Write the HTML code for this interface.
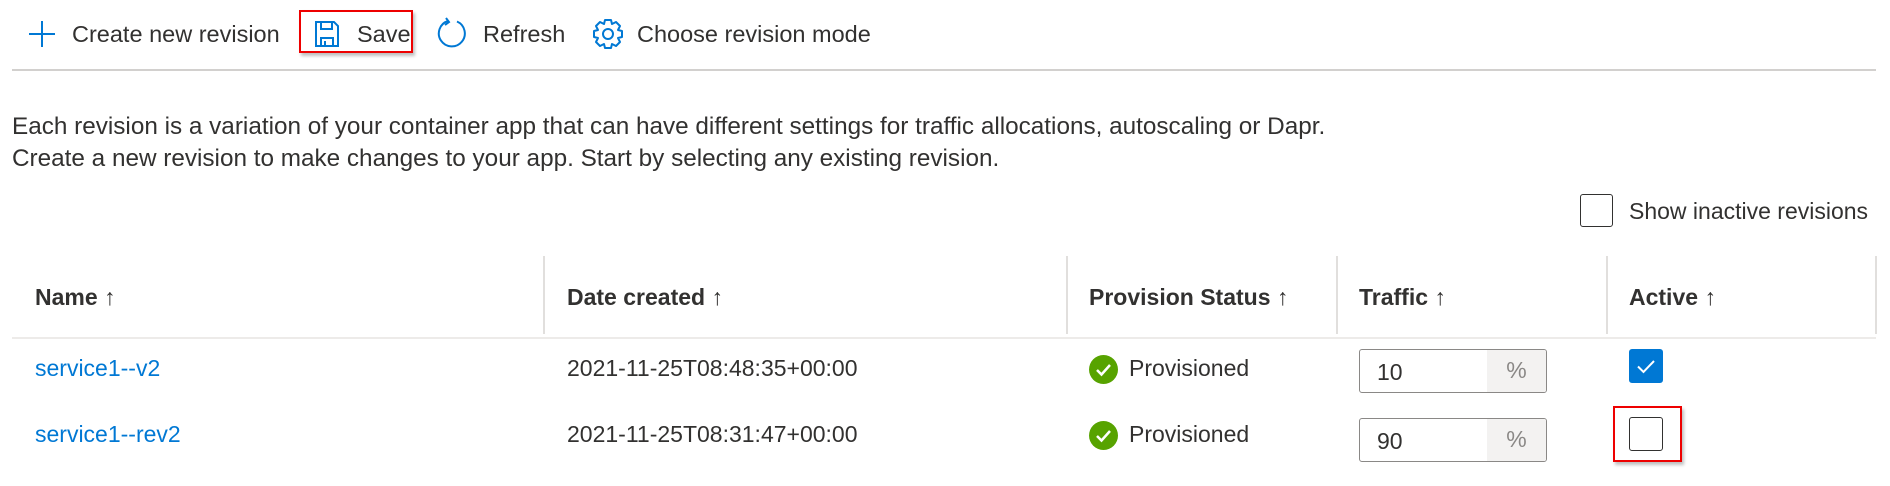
<!DOCTYPE html>
<html><head><meta charset="utf-8"><style>
*{margin:0;padding:0;box-sizing:border-box}
body{width:1890px;height:486px;background:#fff;font-family:"Liberation Sans",Arial,sans-serif;color:#323130;position:relative;overflow:hidden;font-size:23px}
.a{position:absolute;white-space:nowrap;line-height:1}
.hd{font-weight:bold;color:#323130}
.vd{position:absolute;top:256px;height:78px;width:2px;background:#e1dfdd}
.blue{color:#0078d4}
.inp{position:absolute;left:1359px;width:188px;height:44px;border:1.5px solid #8a8886;border-radius:3px;overflow:hidden}
.inp .pc{position:absolute;right:0;top:0;bottom:0;width:59px;background:#f3f2f1;color:#8a8886;text-align:center;line-height:41px}
.inp .v{position:absolute;left:17px;top:0;line-height:44px;font-size:23px}
.ok{position:absolute;left:1089px;width:29px;height:29px;border-radius:50%;background:#57a300}
</style></head><body>
<svg class="a" style="left:28px;top:20px" width="28" height="28" viewBox="0 0 28 28"><path d="M14 1V27M1 14H27" stroke="#0078d4" stroke-width="2"/></svg>
<div class="a" style="left:72px;top:23px;font-size:23.5px">Create new revision</div>
<div class="a" style="left:299px;top:10px;width:114px;height:43px;border:2px solid #e00;box-shadow:2px 3px 3px rgba(0,0,0,.25)"></div>
<svg class="a" style="left:314px;top:20px" width="26" height="28" viewBox="0 0 26 28"><path d="M2 2H20L24 6V26H2Z M7 2V9H18V2 M7 26V18H19V26 M11 21V26" fill="none" stroke="#0078d4" stroke-width="2"/></svg>
<div class="a" style="left:357px;top:23px;font-size:23.5px">Save</div>
<svg class="a" style="left:437px;top:17px" width="32" height="34" viewBox="0 0 32 34"><path d="M11 4A13 13 0 1 0 20 4.5" fill="none" stroke="#0078d4" stroke-width="2"/><path d="M9 1L12 5L8 8" fill="none" stroke="#0078d4" stroke-width="2"/></svg>
<div class="a" style="left:483px;top:23px;font-size:23.5px">Refresh</div>
<svg class="a" style="left:592px;top:18px" width="32" height="32" viewBox="0 0 32 32"><circle cx="16" cy="16" r="5" fill="none" stroke="#0078d4" stroke-width="2"/><path d="M13 2H19L20 6L24 4L28 8L26 12L30 13V19L26 20L28 24L24 28L20 26L19 30H13L12 26L8 28L4 24L6 20L2 19V13L6 12L4 8L8 4L12 6Z" fill="none" stroke="#0078d4" stroke-width="2" stroke-linejoin="round"/></svg>
<div class="a" style="left:637px;top:23px;font-size:23.5px">Choose revision mode</div>
<div class="a" style="left:12px;top:69px;width:1864px;height:2px;background:#d2d0ce"></div>
<div class="a" style="left:12px;top:115px;font-size:24.3px">Each revision is a variation of your container app that can have different settings for traffic allocations, autoscaling or Dapr.</div>
<div class="a" style="left:12px;top:147px;font-size:24.3px">Create a new revision to make changes to your app. Start by selecting any existing revision.</div>
<div class="a" style="left:1580px;top:194px;width:33px;height:33px;border:1.5px solid #323130;border-radius:3px"></div>
<div class="a" style="left:1629px;top:200px">Show inactive revisions</div>
<div class="vd" style="left:543px"></div><div class="vd" style="left:1066px"></div><div class="vd" style="left:1336px"></div><div class="vd" style="left:1606px"></div><div class="vd" style="left:1875px"></div>
<div class="a hd" style="left:35px;top:286px">Name <span style="font-weight:normal">↑</span></div>
<div class="a hd" style="left:567px;top:286px">Date created <span style="font-weight:normal">↑</span></div>
<div class="a hd" style="left:1089px;top:286px">Provision Status <span style="font-weight:normal">↑</span></div>
<div class="a hd" style="left:1359px;top:286px">Traffic <span style="font-weight:normal">↑</span></div>
<div class="a hd" style="left:1629px;top:286px">Active <span style="font-weight:normal">↑</span></div>
<div class="a" style="left:12px;top:337px;width:1864px;height:2px;background:#edebe9"></div>
<div class="a blue" style="left:35px;top:357px">service1--v2</div>
<div class="a" style="left:567px;top:357px">2021-11-25T08:48:35+00:00</div>
<div class="ok" style="top:355px"><svg width="29" height="29"><path d="M8 15L12.5 19.5L21 10" fill="none" stroke="#fff" stroke-width="2.5"/></svg></div>
<div class="a" style="left:1129px;top:357px">Provisioned</div>
<div class="inp" style="top:349px"><span class="v">10</span><span class="pc">%</span></div>
<div class="a" style="left:1629px;top:349px;width:34px;height:34px;border-radius:3px;background:#0078d4"><svg width="34" height="34"><path d="M9 17.5L14.5 23L25 12" fill="none" stroke="#fff" stroke-width="2"/></svg></div>
<div class="a blue" style="left:35px;top:423px">service1--rev2</div>
<div class="a" style="left:567px;top:423px">2021-11-25T08:31:47+00:00</div>
<div class="ok" style="top:421px"><svg width="29" height="29"><path d="M8 15L12.5 19.5L21 10" fill="none" stroke="#fff" stroke-width="2.5"/></svg></div>
<div class="a" style="left:1129px;top:423px">Provisioned</div>
<div class="inp" style="top:418px"><span class="v">90</span><span class="pc">%</span></div>
<div class="a" style="left:1613px;top:406px;width:69px;height:56px;border:2px solid #e00;box-shadow:2px 3px 3px rgba(0,0,0,.25)"></div>
<div class="a" style="left:1629px;top:417px;width:34px;height:34px;border:1.5px solid #323130;border-radius:3px"></div>
</body></html>
